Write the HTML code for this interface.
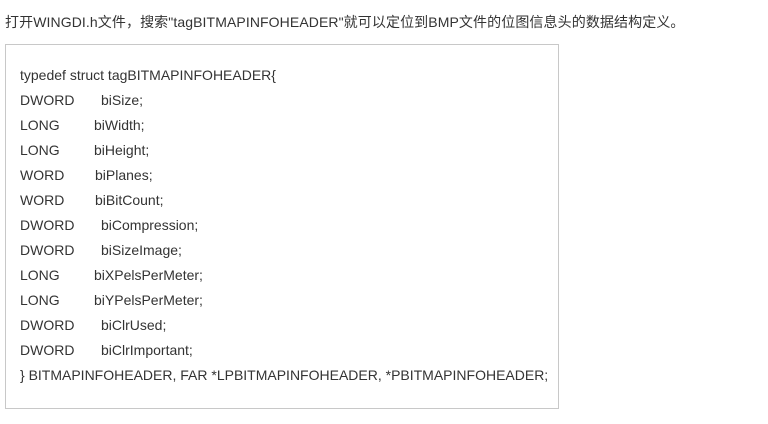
<!DOCTYPE html>
<html><head><meta charset="utf-8"><style>
body{margin:0;width:768px;height:424px;background:#fff;font-family:"Liberation Sans","Noto Sans CJK SC",sans-serif;color:#333;font-size:14px;position:relative;overflow:hidden}
.t{position:absolute;left:5px;top:12px;white-space:nowrap;letter-spacing:0.1px}
.box{position:absolute;left:5px;top:44px;width:554px;height:365px;border:1px solid #c8c8c8;box-sizing:border-box}
.l{position:absolute;left:20px;white-space:nowrap;line-height:18px;letter-spacing:0}
.l span{position:absolute;top:0}
</style></head><body>
<div class="t">打开WINGDI.h文件，搜索"tagBITMAPINFOHEADER"就可以定位到BMP文件的位图信息头的数据结构定义。</div>
<div class="box"></div>
<div class="l" style="top:66px">typedef struct tagBITMAPINFOHEADER{</div>
<div class="l" style="top:91px">DWORD<span style="left:81px">biSize;</span></div>
<div class="l" style="top:116px">LONG<span style="left:74px">biWidth;</span></div>
<div class="l" style="top:141px">LONG<span style="left:74px">biHeight;</span></div>
<div class="l" style="top:166px">WORD<span style="left:75px">biPlanes;</span></div>
<div class="l" style="top:191px">WORD<span style="left:75px">biBitCount;</span></div>
<div class="l" style="top:216px">DWORD<span style="left:81px">biCompression;</span></div>
<div class="l" style="top:241px">DWORD<span style="left:81px">biSizeImage;</span></div>
<div class="l" style="top:266px">LONG<span style="left:74px">biXPelsPerMeter;</span></div>
<div class="l" style="top:291px">LONG<span style="left:74px">biYPelsPerMeter;</span></div>
<div class="l" style="top:316px">DWORD<span style="left:81px">biClrUsed;</span></div>
<div class="l" style="top:341px">DWORD<span style="left:81px">biClrImportant;</span></div>
<div class="l" style="top:366px">} BITMAPINFOHEADER, FAR *LPBITMAPINFOHEADER, *PBITMAPINFOHEADER;</div>
</body></html>
